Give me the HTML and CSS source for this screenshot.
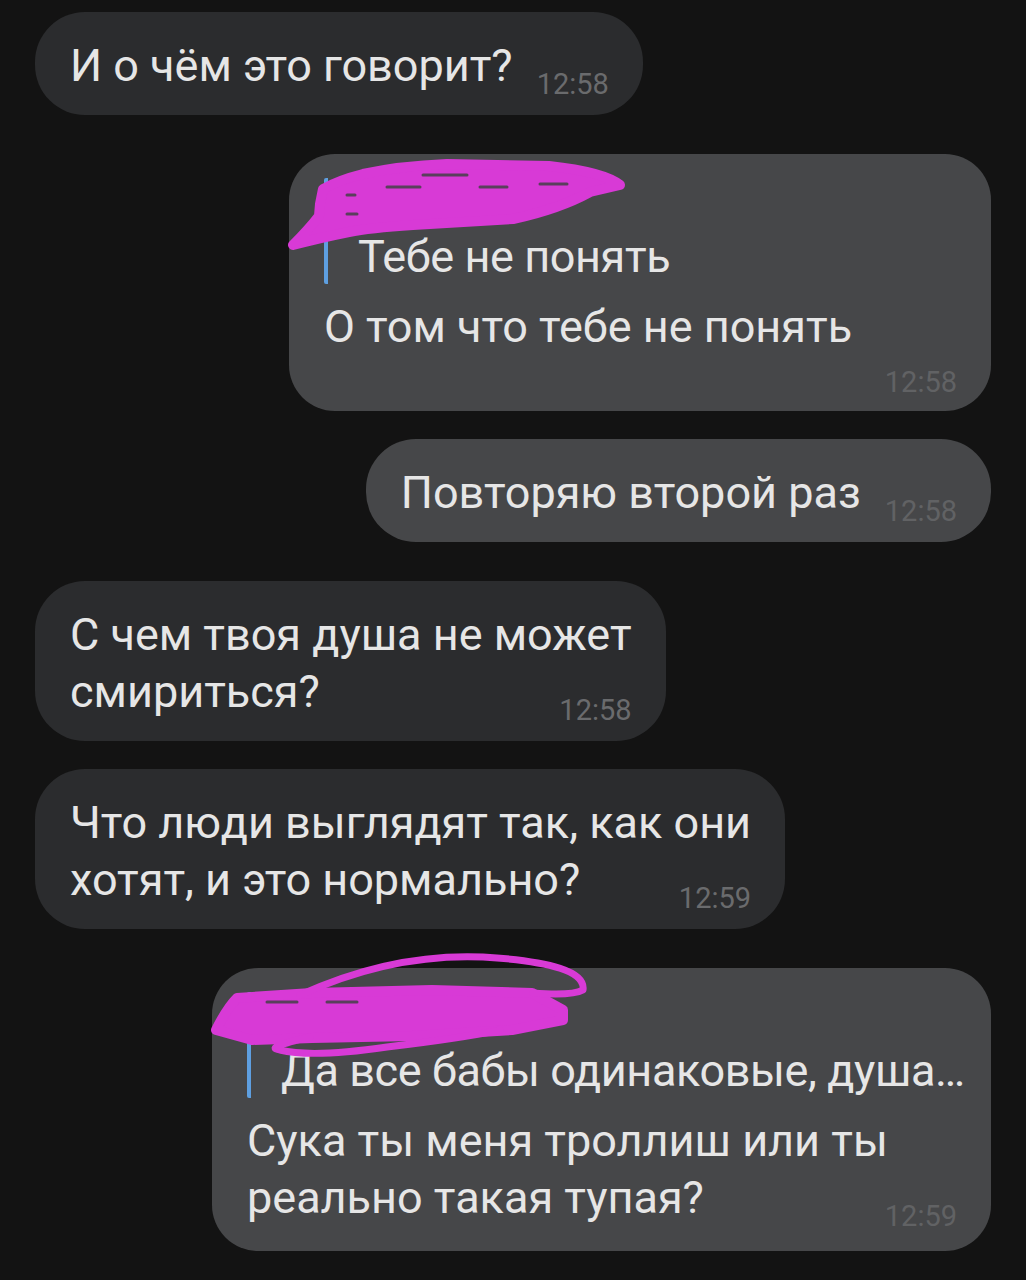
FILE: index.html
```html
<!DOCTYPE html>
<html>
	<head>
		<meta charset="utf-8" />
		<title>Чат</title>
		<link rel="stylesheet" href="styles.css">
	</head>
	<body>
		<div class="chat">
			<div class="bubble in">
				<div class="row"><span>И о чём это говорит?</span><span class="time">12:58</span></div>
			</div>

			<div class="bubble out reply-msg wide-a gap-big">
				<div class="reply">
					<div class="reply-name">Ответ</div>
					<div class="reply-text">Тебе не понять</div>
				</div>
				<div class="line main-first">О том что тебе не понять</div>
				<div class="time-row"><span class="time">12:58</span></div>
				<svg class="scribble" width="340" height="100" viewBox="0 0 340 100">
					<path d="M34 35 Q50 26 74 20 Q110 12 158 10 L260 12 Q315 18 331 31 L301 38 Q270 55 224 65 L124 71 Q80 74 60 78 Q30 84 4 91 Q20 75 30 62 L31 50 Z" />
					<path class="streak" d="M134 21 L178 21 M98 33 L131 33 M191 33 L218 33 M251 30 L278 30 M58 41 L66 41 M58 60 L68 60" />
				</svg>
			</div>

			<div class="bubble out">
				<div class="row"><span>Повторяю второй раз</span><span class="time">12:58</span></div>
			</div>

			<div class="bubble in gap-big">
				<div class="line">С чем твоя душа не может</div>
				<div class="row"><span>смириться?</span><span class="time">12:58</span></div>
			</div>

			<div class="bubble in">
				<div class="line">Что люди выглядят так, как они</div>
				<div class="row"><span>хотят, и это нормально?</span><span class="time">12:59</span></div>
			</div>

			<div class="bubble out reply-msg wide-b gap-big">
				<div class="reply">
					<div class="reply-name">Ответ</div>
					<div class="reply-text">Да все бабы одинаковые, душа…</div>
				</div>
				<div class="line main-first">Сука ты меня троллиш или ты</div>
				<div class="row"><span>реально такая тупая?</span><span class="time">12:59</span></div>
				<svg class="scribble" width="380" height="100" viewBox="0 0 380 100">
					<path d="M4 62 Q15 40 25 30 L100 25 L220 22 L320 25 L351 42 L351 52 L300 62 L200 68 L100 70 L40 72 Z" />
					<path class="thin" d="M88 27 Q180 -15 271 -11 Q375 -5 371 22 Q360 28 321 25" />
					<path class="thin" d="M98 69 Q50 80 68 82 Q100 90 175 79 Q250 70 288 62" />
					<path class="streak" d="M55 34 L85 34 M115 34 L145 34" />
				</svg>
			</div>
		</div>
	</body>
</html>
```

FILE: styles.css
```css
*{
	margin: 0;
	padding: 0;
	box-sizing: border-box;
}
body{
	background: #131313;
	font-family: Roboto, "Noto Sans", sans-serif;
	color: #e6e6e6;
}
.chat{
	display: flex;
	flex-direction: column;
	gap: 28px;
	padding: 12px 35px 30px 35px;
}
.gap-big{
	margin-top: 11px;
}
.bubble{
	position: relative;
	width: fit-content;
	padding: 25px 34px 21px 35px;
	border-radius: 50px;
	font-size: 45px;
	line-height: 57px;
}
.in{
	align-self: flex-start;
	background: #2b2c2e;
}
.out{
	align-self: flex-end;
	background: #464749;
}
.row{
	display: flex;
	justify-content: space-between;
	align-items: baseline;
	gap: 24px;
	white-space: nowrap;
}
.line{
	white-space: nowrap;
}
.time{
	position: relative;
	top: 13px;
	font-size: 29px;
	line-height: 30px;
	color: #6a6b6d;
}
.out .time{
	color: #616264;
}
.reply-msg{
	border-radius: 46px;
	padding-top: 24px;
}
.wide-a{
	width: 702px;
	padding-bottom: 14px;
}
.wide-b{
	width: 779px;
	padding-bottom: 25px;
}
.reply{
	border-left: 4px solid #5e9fe0;
	border-radius: 2px;
	padding-left: 30px;
	white-space: nowrap;
}
.reply-name{
	height: 52px;
	line-height: 52px;
	font-size: 38px;
	color: #5e9fe0;
}
.reply-text{
	line-height: 54px;
	letter-spacing: -0.4px;
}
.main-first{
	margin-top: 14px;
}
.time-row{
	display: flex;
	justify-content: flex-end;
	margin-top: 12px;
	line-height: 34px;
}
.time-row .time{
	top: 0;
}
.scribble{
	position: absolute;
	left: 0;
	top: 0;
	overflow: visible;
}
.scribble path{
	fill: #d83ad6;
	stroke: #d83ad6;
	stroke-width: 10;
	stroke-linejoin: round;
	stroke-linecap: round;
}
.scribble .thin{
	fill: none;
	stroke-width: 7;
}
.scribble .streak{
	fill: none;
	stroke: #5a3f5c;
	stroke-width: 3;
}
```
